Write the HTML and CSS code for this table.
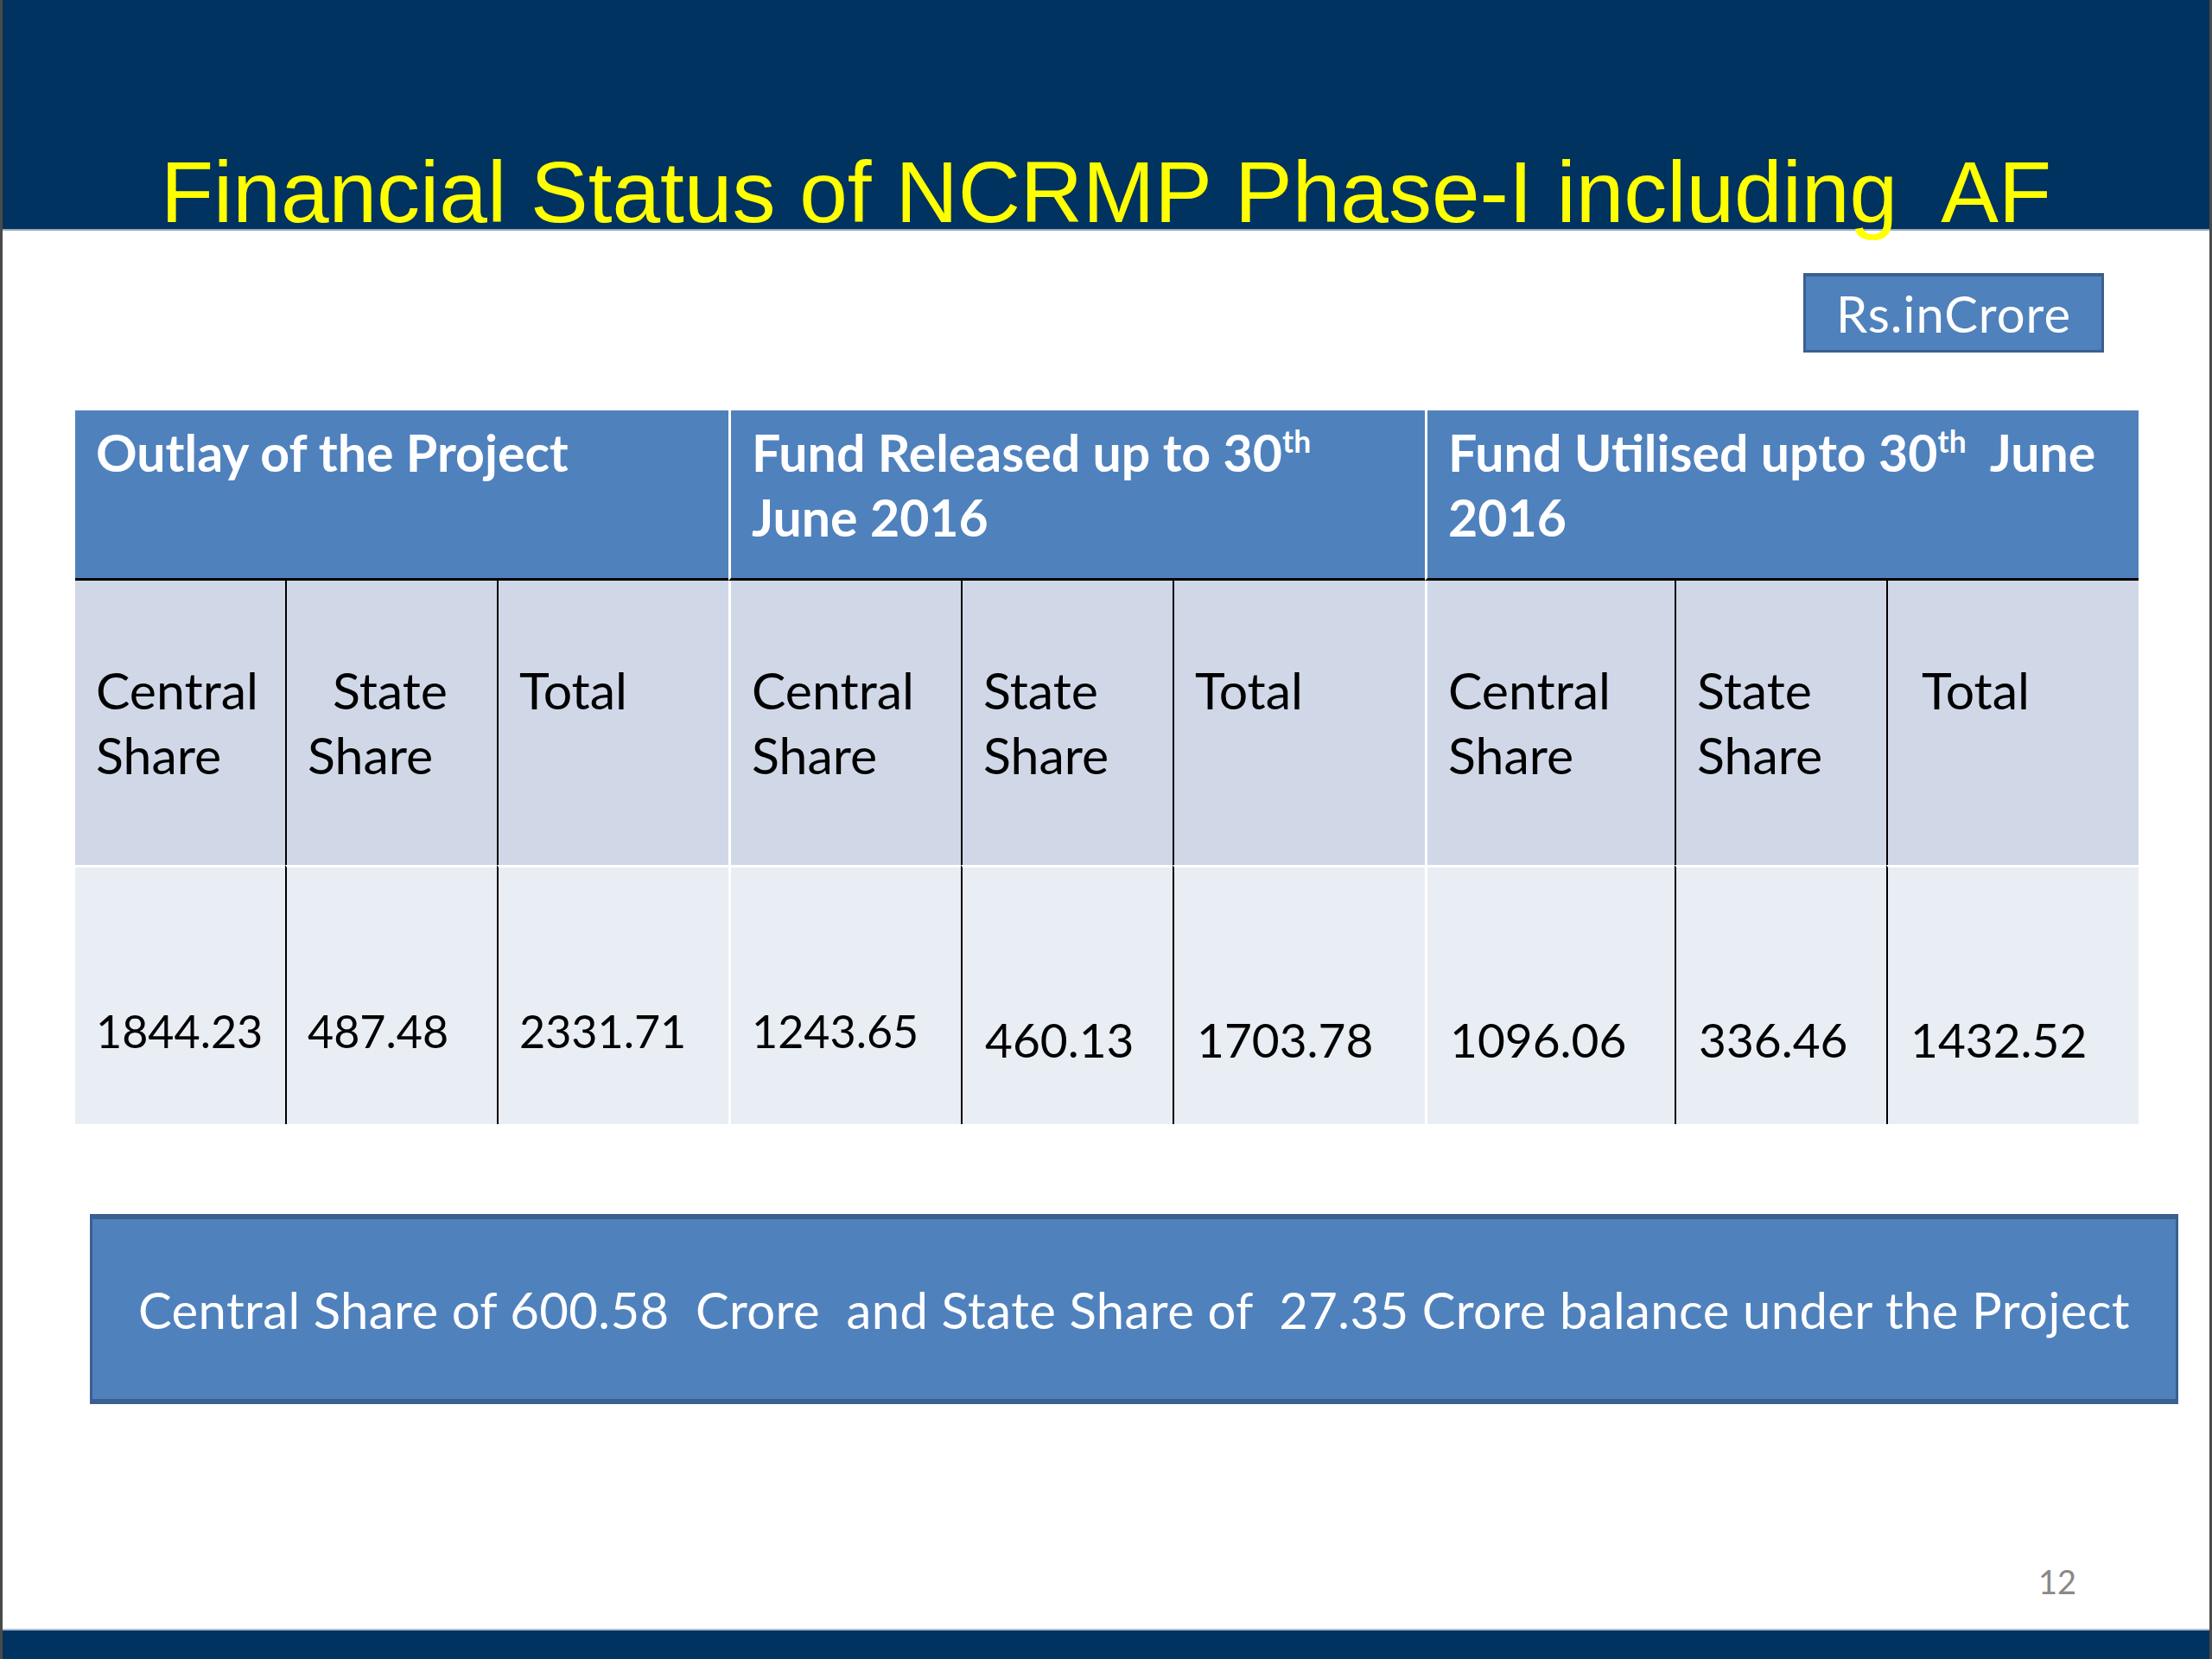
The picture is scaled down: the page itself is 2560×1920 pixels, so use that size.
FILE: index.html
```html
<!DOCTYPE html>
<html lang="en">
<head>
<meta charset="utf-8">
<title>Financial Status of NCRMP Phase-I including AF</title>
<link rel="stylesheet" href="styles.css">
</head>
<body>
<div class="slide">
  <header class="topbar">
    <h1 class="title">Financial Status of NCRMP Phase-I including  AF</h1>
  </header>
  <main class="content">
    <div class="unit-row">
      <div class="unit">Rs.inCrore</div>
    </div>
    <div class="table">
      <div class="cell head span3">Outlay of the Project</div>
      <div class="cell head span3 g">Fund Released up to 30<sup>th</sup><br>June 2016</div>
      <div class="cell head span3 g">Fund Utilised upto 30<sup>th</sup>&nbsp; June<br>2016</div>

      <div class="cell sub">Central<br>Share</div>
      <div class="cell sub d"><span class="ind">State</span><br>Share</div>
      <div class="cell sub d">Total</div>
      <div class="cell sub g">Central<br>Share</div>
      <div class="cell sub d">State<br>Share</div>
      <div class="cell sub d">Total</div>
      <div class="cell sub g">Central<br>Share</div>
      <div class="cell sub d">State<br>Share</div>
      <div class="cell sub d"><span class="ind-sm">Total</span></div>

      <div class="cell val a">1844.23</div>
      <div class="cell val a d">487.48</div>
      <div class="cell val a d">2331.71</div>
      <div class="cell val a g">1243.65</div>
      <div class="cell val b d">460.13</div>
      <div class="cell val b d">1703.78</div>
      <div class="cell val b g">1096.06</div>
      <div class="cell val b d">336.46</div>
      <div class="cell val b d">1432.52</div>
    </div>
    <div class="note">Central Share of 600.58  Crore  and State Share of  27.35 Crore balance under the Project</div>
  </main>
  <footer class="footer">
    <span class="pageno">12</span>
  </footer>
  <div class="bottombar"></div>
</div>
</body>
</html>
```

FILE: styles.css
```css
html, body {
  margin: 0;
  padding: 0;
  background: #ffffff;
}

.slide {
  width: 2560px;
  height: 1920px;
  box-sizing: border-box;
  display: flex;
  flex-direction: column;
  background: #ffffff;
  border-left: 3px solid #4a4a4a;
  border-right: 3px solid #4a4a4a;
  overflow: hidden;
}

.topbar {
  height: 265px;
  flex-shrink: 0;
  background: #00335f;
  box-shadow: 0 2px 0 #9aaabb;
  position: relative;
  z-index: 1;
}

.title {
  margin: 0;
  padding-top: 172px;
  font-family: "Liberation Sans", Arial, sans-serif;
  font-weight: normal;
  font-size: 100px;
  line-height: 100px;
  color: #ffff00;
  text-align: center;
  white-space: pre;
}

.content {
  flex: 1;
  display: flex;
  flex-direction: column;
  font-family: Lato, "Open Sans", sans-serif;
}

.unit-row {
  display: flex;
  justify-content: flex-end;
  padding: 51px 122px 0 0;
}

.unit {
  width: 348px;
  height: 92px;
  box-sizing: border-box;
  background: #4f81bd;
  border: 3px solid #3a6090;
  border-top-width: 4px;
  color: #ffffff;
  font-size: 58px;
  letter-spacing: 1px;
  display: flex;
  align-items: center;
  justify-content: center;
}

.table {
  margin: 67px 0 0 84px;
  display: grid;
  grid-template-columns: 243px 245px 268px 269px 245px 292px 289px 245px 292px;
  grid-template-rows: 197px 329px 300px;
  width: 2388px;
}

.cell {
  box-sizing: border-box;
  padding-left: 24px;
}

.span3 {
  grid-column: span 3;
}

.head {
  background: #4f81bd;
  color: #ffffff;
  font-weight: bold;
  font-size: 59px;
  line-height: 75px;
  padding-top: 11px;
  border-bottom: 3px solid #000000;
}

.head sup {
  font-size: 0.6em;
  line-height: 0;
  vertical-align: 0.62em;
}

.sub {
  background: #d0d8e8;
  color: #000000;
  font-size: 59px;
  line-height: 75px;
  padding-top: 89px;
}

.val {
  background: #e9edf4;
  color: #000000;
  line-height: 60px;
  border-top: 3px solid #ffffff;
}

.val.a {
  font-size: 52px;
  padding-top: 159px;
}

.val.b {
  font-size: 55px;
  padding-top: 169px;
  padding-left: 26px;
}

.d {
  border-left: 2px solid #000000;
}

.g {
  border-left: 3px solid #ffffff;
}

.ind {
  padding-left: 29px;
}

.ind-sm {
  padding-left: 15px;
}

.note {
  margin: 104px 0 0 101px;
  width: 2417px;
  height: 220px;
  box-sizing: border-box;
  background: #4f81bd;
  border: 3px solid #3a6090;
  border-top-width: 6px;
  border-bottom-width: 6px;
  color: #ffffff;
  font-size: 58px;
  letter-spacing: 0.4px;
  display: flex;
  align-items: center;
  justify-content: center;
  white-space: pre;
}

.footer {
  height: 75px;
  flex-shrink: 0;
  display: flex;
  justify-content: flex-end;
  padding-right: 154px;
  font-family: Lato, "Open Sans", sans-serif;
}

.pageno {
  font-size: 38px;
  line-height: 40px;
  color: #898989;
}

.bottombar {
  height: 35px;
  flex-shrink: 0;
  background: #00335f;
  border-top: 2px solid #a9bfd6;
  box-sizing: border-box;
}
```
